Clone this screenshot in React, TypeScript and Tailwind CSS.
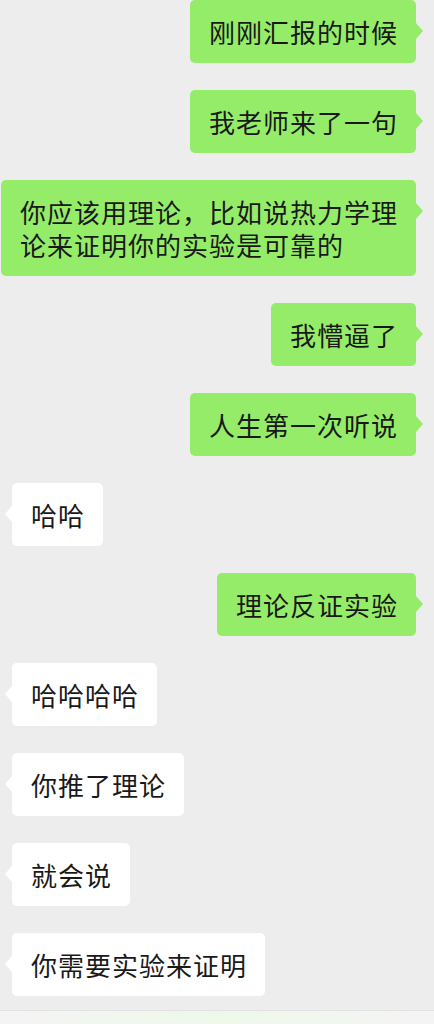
type Msg = { text: string; mine: boolean };

const messages: Msg[] = [
  { text: "刚刚汇报的时候", mine: true },
  { text: "我老师来了一句", mine: true },
  { text: "你应该用理论，比如说热力学理论来证明你的实验是可靠的", mine: true },
  { text: "我懵逼了", mine: true },
  { text: "人生第一次听说", mine: true },
  { text: "哈哈", mine: false },
  { text: "理论反证实验", mine: true },
  { text: "哈哈哈哈", mine: false },
  { text: "你推了理论", mine: false },
  { text: "就会说", mine: false },
  { text: "你需要实验来证明", mine: false },
];

function Bubble({ text, mine }: Msg) {
  return (
    <div className={mine ? "flex justify-end pr-[18px]" : "flex justify-start pl-[12px]"}>
      <div
        className={`relative rounded-[5px] pl-[19px] pr-[18px] py-[15px] text-[26px] leading-[33px] tracking-[1px] text-[#191919] max-w-[415px] ${
          mine ? "bg-[#95ec69]" : "bg-white"
        }`}
      >
        {/* tail */}
        <span
          className={`absolute top-[23px] w-0 h-0 border-y-[8px] border-y-transparent ${
            mine
              ? "right-[-7px] border-l-[7px] border-l-[#95ec69]"
              : "left-[-7px] border-r-[7px] border-r-white"
          }`}
        />
        {text}
      </div>
    </div>
  );
}

export default function App() {
  return (
    <div
      className="w-[434px] h-[1024px] overflow-hidden bg-[#ededed] flex flex-col"
      style={{ fontFamily: '"Noto Sans CJK SC", "Noto Sans", sans-serif' }}
    >
      <div className="flex flex-col gap-[27px] flex-1">
        {messages.map((m, i) => (
          <Bubble key={i} {...m} />
        ))}
      </div>
      {/* input bar edge */}
      <div className="h-[14px] border-t border-[#e2e2e2] bg-gradient-to-r from-[#f4f4f4] via-[#eef8ea] to-[#f4f4f4]" />
    </div>
  );
}
